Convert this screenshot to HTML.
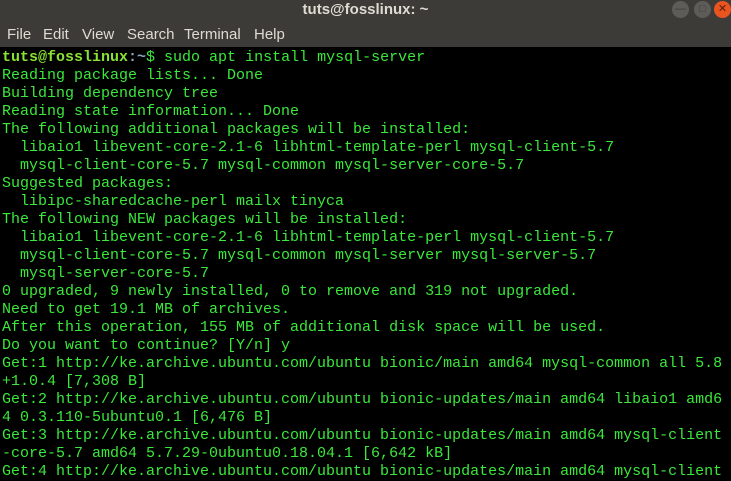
<!DOCTYPE html>
<html><head><meta charset="utf-8"><style>
body{margin:0;width:731px;height:480px;overflow:hidden;background:#000;font-family:"Liberation Sans",sans-serif}
#title{position:absolute;left:0;top:0;width:731px;height:22px;background:#3c3b37;color:#dfdbd2;font-weight:bold;font-size:15px;text-align:center;line-height:20px}
#menu{position:absolute;left:0;top:22px;width:731px;height:25px;background:#3c3b37;color:#dfdbd2;font-size:15px;line-height:26px}
#menu span{position:absolute;top:0}
.b{position:absolute;top:1px;width:17px;height:17px;border-radius:50%;background:#5d5c58;color:#3c3b37;font-size:11px;text-align:center;line-height:17px}
#term{position:absolute;left:2px;top:49px;font-family:"Liberation Mono",monospace;font-size:15px;line-height:18px;color:#3be83b;white-space:pre}
.p{color:#8ae234;font-weight:bold}.t{color:#8fa3c2;font-weight:bold}
</style></head><body>
<div id="title">tuts@fosslinux: ~</div>
<div class="b" style="left:672px">—</div><div class="b" style="left:694px">□</div><div class="b" style="left:714px;background:#e9541f;color:#5a2010">✕</div>
<div id="menu"><span style="left:7px">File</span><span style="left:43px">Edit</span><span style="left:82px">View</span><span style="left:127px">Search</span><span style="left:184px">Terminal</span><span style="left:254px">Help</span></div>
<div id="term"><span class="p">tuts@fosslinux</span><span class="t">:~</span>$ sudo apt install mysql-server
Reading package lists... Done
Building dependency tree
Reading state information... Done
The following additional packages will be installed:
  libaio1 libevent-core-2.1-6 libhtml-template-perl mysql-client-5.7
  mysql-client-core-5.7 mysql-common mysql-server-core-5.7
Suggested packages:
  libipc-sharedcache-perl mailx tinyca
The following NEW packages will be installed:
  libaio1 libevent-core-2.1-6 libhtml-template-perl mysql-client-5.7
  mysql-client-core-5.7 mysql-common mysql-server mysql-server-5.7
  mysql-server-core-5.7
0 upgraded, 9 newly installed, 0 to remove and 319 not upgraded.
Need to get 19.1 MB of archives.
After this operation, 155 MB of additional disk space will be used.
Do you want to continue? [Y/n] y
Get:1 http://ke.archive.ubuntu.com/ubuntu bionic/main amd64 mysql-common all 5.8
+1.0.4 [7,308 B]
Get:2 http://ke.archive.ubuntu.com/ubuntu bionic-updates/main amd64 libaio1 amd6
4 0.3.110-5ubuntu0.1 [6,476 B]
Get:3 http://ke.archive.ubuntu.com/ubuntu bionic-updates/main amd64 mysql-client
-core-5.7 amd64 5.7.29-0ubuntu0.18.04.1 [6,642 kB]
Get:4 http://ke.archive.ubuntu.com/ubuntu bionic-updates/main amd64 mysql-client</div>
</body></html>
